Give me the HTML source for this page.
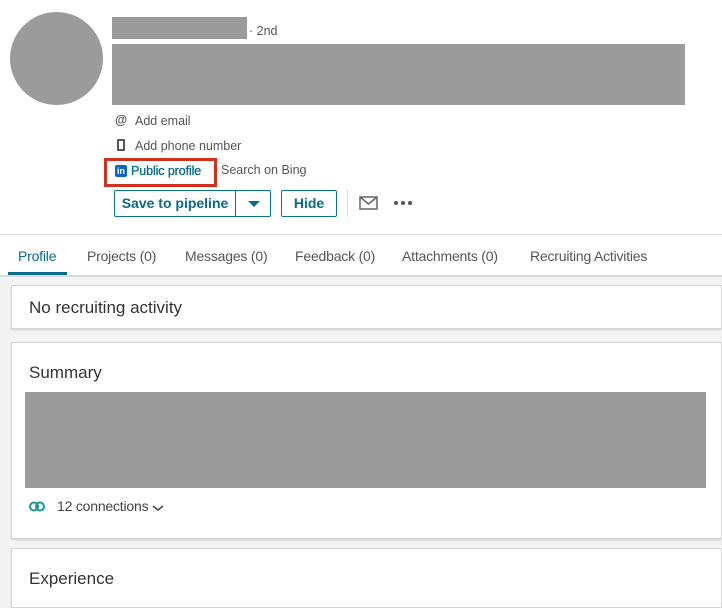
<!DOCTYPE html>
<html><head><style>
*{margin:0;padding:0;box-sizing:border-box}
body{width:722px;height:595px;overflow:hidden;background:#f3f3f3;font-family:"Liberation Sans",sans-serif;position:relative;color:#333}
.a{position:absolute}
.top{left:0;top:0;width:722px;height:235px;background:#fff;border-bottom:1px solid #ddd}
.tabs{left:0;top:235px;width:722px;height:42px;background:#fff;border-bottom:2px solid #d8d8d8}
.tab{position:absolute;top:13px;font-size:14px;color:#555;letter-spacing:-0.2px}
.card{background:#fff;border:1px solid #d6d6d6;box-shadow:0 1px 2px rgba(0,0,0,.15)}
.sm{font-size:12.5px;color:#555}
.btn{border:1px solid #0a7394;color:#0a6a8a;font-weight:bold;font-size:14px;background:#fff}
</style></head><body>
<div class="a top"></div>
<div class="a" style="left:10px;top:12px;width:93px;height:93px;border-radius:50%;background:#9b9b9b"></div>
<div class="a" style="left:112px;top:17px;width:135px;height:22px;background:#9b9b9b"></div>
<div class="a sm" style="left:249px;top:24px">· 2nd</div>
<div class="a" style="left:112px;top:44px;width:573px;height:61px;background:#9b9b9b"></div>
<div class="a sm" style="left:115px;top:113px;font-weight:bold">@</div>
<div class="a sm" style="left:135px;top:114px">Add email</div>
<div class="a" style="left:117px;top:139px;width:8px;height:12px;border:2px solid #555;border-radius:1px"></div>
<div class="a sm" style="left:135px;top:139px">Add phone number</div>
<div class="a" style="left:104px;top:158px;width:113px;height:29px;border:3px solid #d2301f"></div>
<div class="a" style="left:115px;top:165px;width:12px;height:12px;background:#0a66c2;border-radius:2px;color:#fff;font-size:9px;font-weight:bold;line-height:12px;text-align:center">in</div>
<div class="a" style="left:131px;top:164px;font-size:12.5px;color:#0a6a8a;letter-spacing:-0.1px;-webkit-text-stroke:0.3px #0a6a8a">Public profile</div>
<div class="a sm" style="left:221px;top:163px">Search on Bing</div>
<div class="a btn" style="left:114px;top:190px;width:122px;height:27px;line-height:25px;text-align:center;border-radius:2px 0 0 2px">Save to pipeline</div>
<div class="a btn" style="left:235px;top:190px;width:36px;height:27px;border-radius:0 2px 2px 0"></div>
<div class="a" style="left:248px;top:201px;border-left:6px solid transparent;border-right:6px solid transparent;border-top:6px solid #0a6a8a"></div>
<div class="a btn" style="left:281px;top:190px;width:56px;height:27px;line-height:25px;text-align:center;border-radius:2px">Hide</div>
<div class="a" style="left:347px;top:190px;width:1px;height:27px;background:#ddd"></div>
<svg class="a" style="left:359px;top:196px" width="19" height="14"><rect x="1" y="1" width="17" height="12" fill="none" stroke="#666" stroke-width="1.5"/><path d="M1 1l8.5 7L18 1" fill="none" stroke="#666" stroke-width="1.5"/></svg>
<svg class="a" style="left:393px;top:200px" width="20" height="6"><circle cx="3" cy="3" r="2" fill="#555"/><circle cx="10" cy="3" r="2" fill="#555"/><circle cx="17" cy="3" r="2" fill="#555"/></svg>
<div class="a tabs">
<div class="tab" style="left:18px;color:#0a6a8a">Profile</div>
<div class="a" style="left:8px;top:37px;width:59px;height:3px;background:#0a6a8a"></div>
<div class="tab" style="left:87px">Projects (0)</div>
<div class="tab" style="left:185px">Messages (0)</div>
<div class="tab" style="left:295px">Feedback (0)</div>
<div class="tab" style="left:402px">Attachments (0)</div>
<div class="tab" style="left:530px">Recruiting Activities</div>
</div>
<div class="a card" style="left:11px;top:285px;width:711px;height:44px"></div>
<div class="a" style="left:29px;top:298px;font-size:17px;color:#333">No recruiting activity</div>
<div class="a card" style="left:11px;top:342px;width:711px;height:197px"></div>
<div class="a" style="left:29px;top:363px;font-size:17px;color:#333">Summary</div>
<div class="a" style="left:25px;top:392px;width:681px;height:96px;background:#9b9b9b"></div>
<svg class="a" style="left:29px;top:501px" width="16" height="11"><circle cx="5" cy="5.5" r="4" fill="none" stroke="#1b9b8f" stroke-width="2"/><circle cx="11" cy="5.5" r="4" fill="none" stroke="#1b9b8f" stroke-width="2"/></svg>
<div class="a" style="left:57px;top:498px;font-size:14px;color:#444;letter-spacing:-0.2px">12 connections</div>
<svg class="a" style="left:152px;top:505px" width="12" height="7"><path d="M1 1l5 4 5-4" fill="none" stroke="#444" stroke-width="1.5"/></svg>
<div class="a card" style="left:11px;top:548px;width:711px;height:60px"></div>
<div class="a" style="left:29px;top:569px;font-size:17px;color:#333">Experience</div>
</body></html>
